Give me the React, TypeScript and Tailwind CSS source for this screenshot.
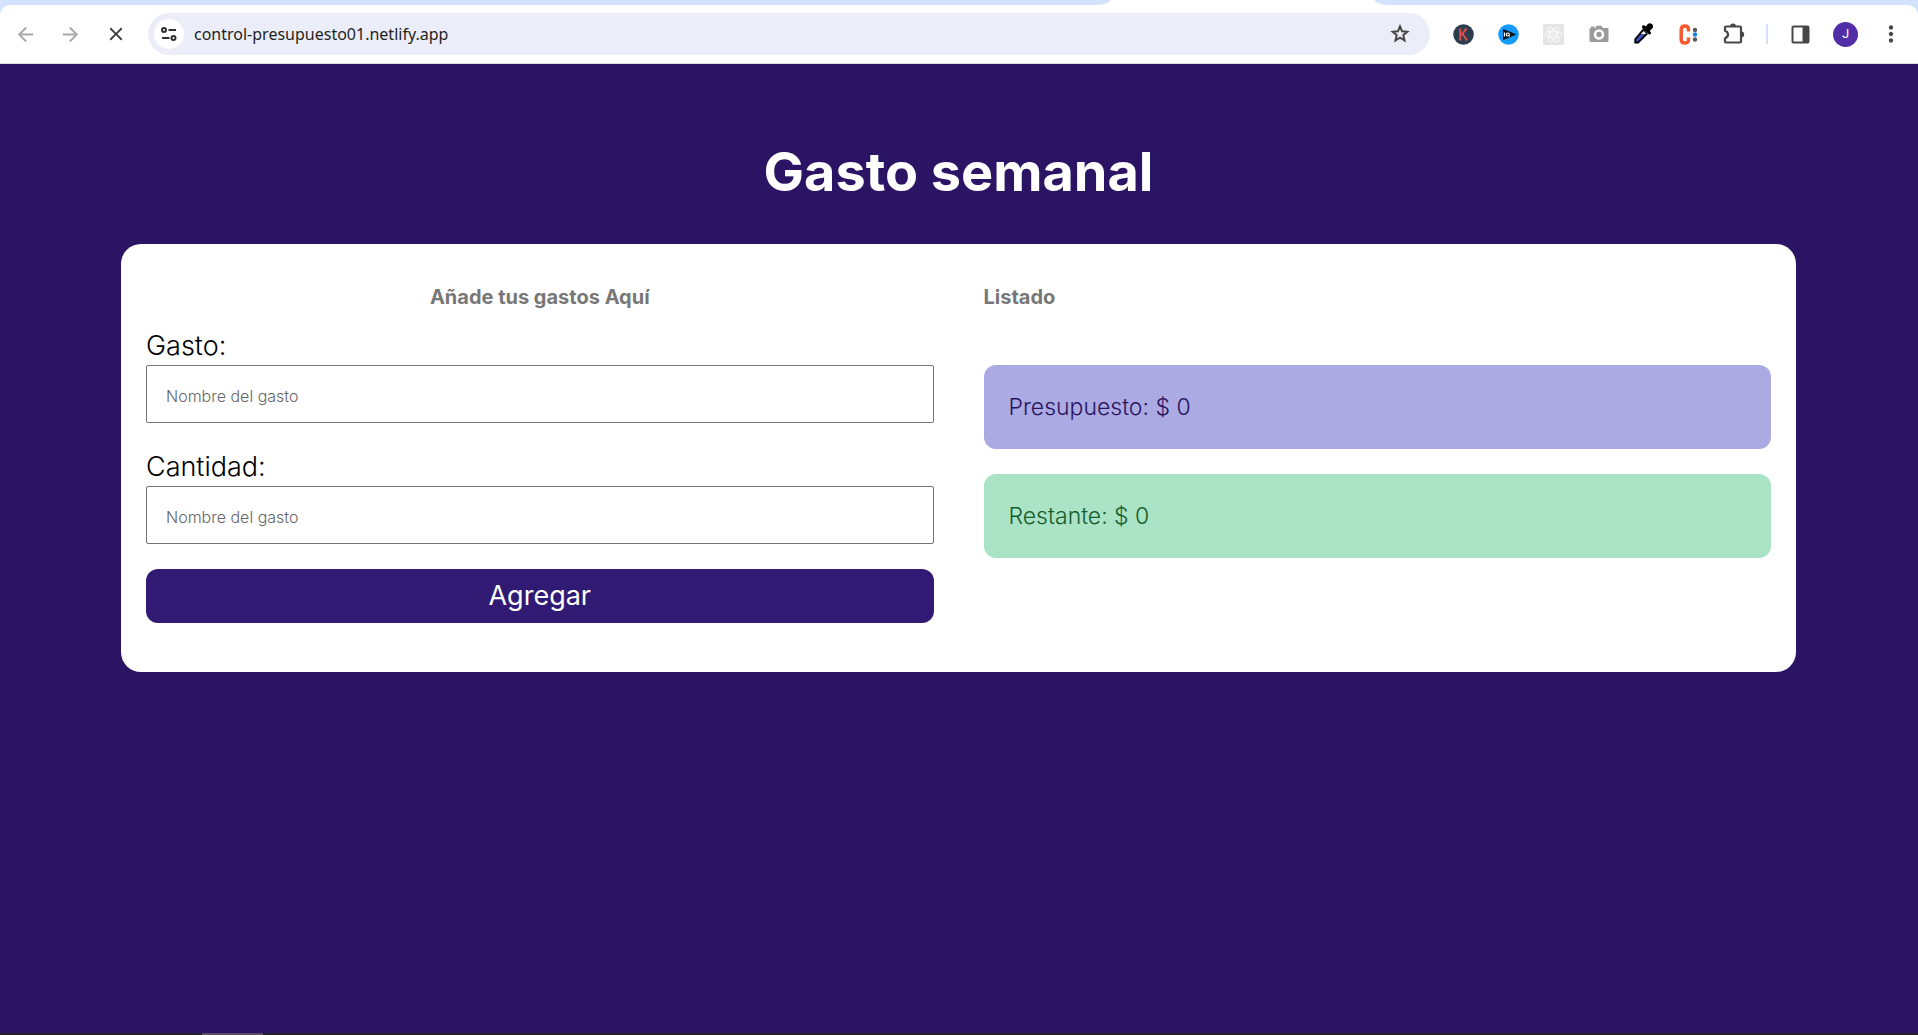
import type { ReactNode } from "react";
import { MdArrowBack, MdArrowForward, MdClose, MdMoreVert } from "react-icons/md";

function ToolButton({ label, children }: { label: string; children: ReactNode }) {
  return (
    <button
      type="button"
      aria-label={label}
      className="flex h-[42px] w-[45px] shrink-0 items-center justify-center"
    >
      {children}
    </button>
  );
}

function SiteSettingsIcon() {
  return (
    <svg width="16" height="14" viewBox="0 0 16 14" fill="none" stroke="#2f3033" strokeWidth="2">
      <circle cx="3" cy="3" r="2" />
      <path d="M7.5 3H15M1 11h7.5" />
      <circle cx="12.5" cy="11" r="2" />
    </svg>
  );
}

function StarIcon() {
  return (
    <svg width="22" height="22" viewBox="0 0 22 22" fill="none" stroke="#474747" strokeWidth="2">
      <path d="M11 3.4l2.05 4.85 5.25.45-4 3.45 1.2 5.15L11 14.55 6.5 17.3l1.2-5.15-4-3.45 5.25-.45z" />
    </svg>
  );
}

function KIcon() {
  return (
    <svg width="21" height="21" viewBox="0 0 21 21" fill="none">
      <circle cx="10.500" cy="10.500" r="10.300" fill="#2b3d4f" />
      <path d="M7.300 4.500v12M13.600 4.500l-5.200 6.300M9.400 9.500l4.600 7" stroke="#e2504c" strokeWidth="2" />
    </svg>
  );
}

function PlayIcon() {
  return (
    <svg width="21" height="21" viewBox="0 0 21 21" fill="none">
      <circle cx="10.500" cy="10.500" r="10.300" fill="#149bfc" />
      <path d="M5 4.700L18.500 10.500 5 16.300z" fill="#101418" />
      <path d="M6.500 8.500v4" stroke="#fff" strokeWidth="1.200" />
      <circle cx="9.800" cy="10.500" r="1.500" stroke="#fff" strokeWidth="1.200" />
      <path d="M10.300 11l1.400 1.600" stroke="#fff" />
    </svg>
  );
}

function AtomIcon() {
  return (
    <svg width="21" height="21" viewBox="0 0 21 21" fill="none">
      <rect width="21" height="21" rx="1.500" fill="#e4e4e4" />
      <g stroke="#fafafa">
        <ellipse cx="10.500" cy="10.500" rx="8.500" ry="3.400" />
        <ellipse cx="10.500" cy="10.500" rx="8.500" ry="3.400" transform="rotate(60 10.500 10.500)" />
        <ellipse cx="10.500" cy="10.500" rx="8.500" ry="3.400" transform="rotate(120 10.500 10.500)" />
        <circle cx="10.500" cy="10.500" r="1.500" />
      </g>
    </svg>
  );
}

function CameraIcon() {
  return (
    <svg width="20" height="18" viewBox="0 0 20 18" fill="none">
      <path
        d="M1.500 3H2V1.500h3.500V3h.8L7.500.8h5L13.700 3h4.800q1 0 1 1v12q0 1-1 1h-17q-1 0-1-1V4q0-1 1-1z"
        fill="#9b9b9b"
      />
      <circle cx="10" cy="9.500" r="4" stroke="#fff" strokeWidth="2.500" />
    </svg>
  );
}

function DropperIcon() {
  return (
    <svg width="21" height="22" viewBox="0 0 21 22">
      <path d="M10 5.500L1.300 16v4.500H5.500L15 11z" fill="#000" />
      <path d="M10.500 8L7.700 11.300h4.500L13 10.500z" fill="#fff" />
      <path d="M7.500 11.500L3.300 16.500v2.300h1.500l6.800-7.300z" fill="#3d56c4" />
      <path
        d="M9.300 2.500l2-.3 1.500 1.300 2-2.500q2.200-1.600 4.300.3 1.900 2 .2 4.200l-2.500 2.200 1.200 1.500-.4 2-1.600.3-7-6.800z"
        fill="#000"
      />
    </svg>
  );
}

function ColonIcon() {
  return (
    <svg width="19" height="21" viewBox="0 0 19 21" fill="none">
      <path
        d="M9.500 7.500V5.500Q9.500 2 6 2T2.200 5.500v10Q2.200 19 6 19t3.500-3.500v-2"
        stroke="#f4592f"
        strokeWidth="3.500"
      />
      <circle cx="16" cy="6" r="2.200" fill="#55595c" />
      <circle cx="16" cy="10.500" r="2.200" fill="#1a82e2" />
      <circle cx="16" cy="15.500" r="2.200" fill="#55595c" />
    </svg>
  );
}

function PuzzleIcon() {
  return (
    <svg width="22" height="22" viewBox="0 0 22 22">
      <path
        d="M3 3.500h14q1 0 1 1v14q0 1-1 1H3q-1 0-1-1v-3.300q3-1 3-3.700T2 7.800V4.500q0-1 1-1z"
        fill="none"
        stroke="#474747"
        strokeWidth="2.200"
        strokeLinejoin="round"
      />
      <path d="M7 3.400a3 3 0 016 0zM18.200 8.500a3 3 0 010 6z" fill="#474747" />
    </svg>
  );
}

function PanelIcon() {
  return (
    <svg width="19" height="19" viewBox="0 0 19 19">
      <rect x="1.500" y="1.500" width="16" height="16" rx="1" fill="none" stroke="#474747" strokeWidth="2" />
      <path d="M11.500 1.500h6v16h-6z" fill="#474747" />
    </svg>
  );
}

function BrowserBar() {
  return (
    <header className="bg-[#d3e3fd]">
      <div className="grid h-[5px] grid-cols-[1110fr_265fr_543fr] bg-white">
        <div className="rounded-br-[14px_5px] bg-[#d3e3fd]" />
        <div />
        <div className="rounded-bl-[14px_5px] bg-[#d3e3fd]" />
      </div>
      <div className="flex h-[59px] items-center rounded-t-[10px] border-b border-[#dddde3] bg-white pr-[5px] pl-[3px]">
        <ToolButton label="Atrás">
          <MdArrowBack size={23} color="#a9a9a9" />
        </ToolButton>
        <ToolButton label="Adelante">
          <MdArrowForward size={23} color="#a9a9a9" />
        </ToolButton>
        <ToolButton label="Detener">
          <MdClose size={22} color="#3c3d40" />
        </ToolButton>
        <div className="mr-[11px] ml-[10px] flex h-[42px] min-w-0 flex-1 items-center rounded-full bg-[#ebeef8] pr-2 pl-[6px]">
          <button
            type="button"
            aria-label="Información del sitio"
            className="flex size-[30px] shrink-0 items-center justify-center rounded-full bg-white"
          >
            <SiteSettingsIcon />
          </button>
          <input
            aria-label="Dirección"
            defaultValue="control-presupuesto01.netlify.app"
            className="ml-[10px] h-8 min-w-0 flex-1 bg-transparent font-['Noto_Sans',sans-serif] text-[16px] text-[#1f1f1f] outline-none"
          />
          <ToolButton label="Guardar en favoritos">
            <StarIcon />
          </ToolButton>
        </div>
        <ToolButton label="Extensión K">
          <KIcon />
        </ToolButton>
        <ToolButton label="Extensión IQ">
          <PlayIcon />
        </ToolButton>
        <ToolButton label="React">
          <AtomIcon />
        </ToolButton>
        <ToolButton label="Captura">
          <CameraIcon />
        </ToolButton>
        <ToolButton label="Cuentagotas">
          <DropperIcon />
        </ToolButton>
        <ToolButton label="Extensión C">
          <ColonIcon />
        </ToolButton>
        <ToolButton label="Extensiones">
          <PuzzleIcon />
        </ToolButton>
        <div className="mx-[10px] h-5 w-[2px] shrink-0 bg-[#d3e3fd]" />
        <ToolButton label="Panel lateral">
          <PanelIcon />
        </ToolButton>
        <ToolButton label="Perfil">
          <span className="flex size-[25px] items-center justify-center rounded-full bg-[#512da8] font-['Roboto',sans-serif] text-[13px] text-white">
            J
          </span>
        </ToolButton>
        <ToolButton label="Menú">
          <MdMoreVert size={26} color="#474747" />
        </ToolButton>
      </div>
    </header>
  );
}

function Field({ id, label }: { id: string; label: string }) {
  return (
    <div>
      <label htmlFor={id} className="block text-[27px] leading-[38px] font-light text-black">
        {label}
      </label>
      <input
        id={id}
        placeholder="Nombre del gasto"
        className="block h-[58px] w-full rounded-[2px] border border-[#767676] bg-white px-[19px] pt-1 text-[16px] font-light outline-none placeholder:text-[#666]"
      />
    </div>
  );
}

export default function App() {
  return (
    <div className="flex min-h-screen flex-col bg-[#2a1463] font-['Inter',sans-serif]">
      <BrowserBar />
      <main className="flex-1 pt-[72px] pr-[122px] pb-12 pl-[121px]">
        <h1 className="text-center text-[54px] leading-[72px] font-bold text-white">Gasto semanal</h1>
        <div className="mt-9 grid grid-cols-2 gap-[50px] rounded-[20px] bg-white px-[25px] pt-[38px] pb-[49px]">
          <form onSubmit={(event) => event.preventDefault()}>
            <h2 className="text-center text-[20px] leading-[30px] font-bold text-[#777]">
              Añade tus gastos Aquí
            </h2>
            <div className="mt-[15px] flex flex-col gap-[25px]">
              <Field id="gasto" label="Gasto:" />
              <Field id="cantidad" label="Cantidad:" />
              <button
                type="submit"
                className="h-[54px] w-full rounded-xl bg-[#301a73] text-[27px] leading-[54px] text-white"
              >
                Agregar
              </button>
            </div>
          </form>
          <section>
            <h2 className="text-[20px] leading-[30px] font-bold text-[#777]">Listado</h2>
            <div className="mt-[53px] flex flex-col gap-[25px] text-[23px] leading-[34px] font-light">
              <p className="rounded-xl bg-[#abaae2] p-[25px] text-[#29145f]">Presupuesto: $ 0</p>
              <p className="rounded-xl bg-[#aae3c6] p-[25px] text-[#155e2c]">Restante: $ 0</p>
            </div>
          </section>
        </div>
      </main>
      <footer className="flex h-[2px] bg-[#241d2b] pl-[202px]">
        <div className="w-[61px] bg-[#5a4c63]" />
      </footer>
    </div>
  );
}
